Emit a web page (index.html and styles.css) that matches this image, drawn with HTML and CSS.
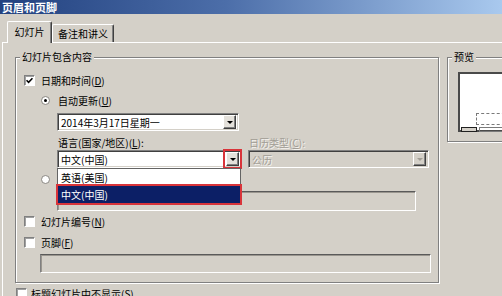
FILE: index.html
```html
<!DOCTYPE html>
<html lang="zh-CN">
<head>
  <meta charset="UTF-8">
  <meta name="viewport" content="width=device-width, initial-scale=1.0">
  <title>页眉和页脚</title>
  <link rel="stylesheet" href="styles.css">
</head>
<body>
  <div class="titlebar">页眉和页脚</div>

  <div class="dialog">
    <div class="tabs">
      <div class="tab active">幻灯片</div>
      <div class="tab">备注和讲义</div>
    </div>

    <div class="tab-page">
      <div class="columns">
        <div class="group content-group">
          <div class="group-label">幻灯片包含内容</div>

          <div class="check-row date-row">
            <span class="checkbox"><svg width="7" height="7" viewBox="0 0 7 7"><path d="M0.5 3.2 L2.6 5.4 L6.5 1.2" fill="none" stroke="#000" stroke-width="1.6"/></svg></span>
            <span>日期和时间(<u>D</u>)</span>
          </div>

          <div class="radio-row auto-row">
            <span class="radio selected"></span>
            <span>自动更新(<u>U</u>)</span>
          </div>

          <div class="combo date-combo">
            <span class="combo-text">2014年3月17日星期一</span>
            <span class="drop-button"></span>
          </div>

          <div class="lang-grid">
            <div class="field">
              <div class="field-label">语言(国家/地区)(<u>L</u>):</div>
              <div class="combo">
                <span class="combo-text">中文(中国)</span>
                <span class="drop-button marked"></span>
                <div class="drop-list">
                  <div class="drop-item">英语(美国)</div>
                  <div class="drop-item selected">中文(中国)</div>
                </div>
              </div>
            </div>
            <div class="field disabled">
              <div class="field-label">日历类型(<u>C</u>):</div>
              <div class="combo">
                <span class="combo-text">公历</span>
                <span class="drop-button"></span>
              </div>
            </div>
          </div>

          <!-- the label of this radio is hidden by the open list -->
          <div class="radio-row fixed-row">
            <span class="radio"></span>
          </div>
          <div class="edit fixed-edit"></div>

          <div class="check-row number-row">
            <span class="checkbox"></span>
            <span>幻灯片编号(<u>N</u>)</span>
          </div>

          <div class="check-row footer-row">
            <span class="checkbox"></span>
            <span>页脚(<u>F</u>)</span>
          </div>
          <div class="edit footer-edit"></div>
        </div>

        <div class="group preview-group">
          <div class="group-label">预览</div>
          <div class="preview-page">
            <div class="pv-area"></div>
            <div class="pv-date"></div>
            <div class="pv-footer"></div>
          </div>
        </div>
      </div>

      <div class="check-row title-row">
        <span class="checkbox"></span>
        <span>标题幻灯片中不显示(<u>S</u>)</span>
      </div>
    </div>
  </div>
</body>
</html>
```

FILE: styles.css
```css
* {
  box-sizing: border-box;
}

body {
  width: 502px;
  height: 296px;
  margin: 0;
  overflow: hidden;
  font-family: "Noto Sans CJK SC", sans-serif;
  font-size: 10px;
  color: #000;
  background-color: #d4d0c8;
}

u {
  text-decoration: underline;
}

.titlebar {
  height: 14px;
  padding-left: 2px;
  background: linear-gradient(to right, #22417f, #4c6ea9 45%, #a9c9ee);
  color: #fff;
  font-size: 11px;
  font-weight: bold;
  line-height: 14px;
}

.dialog {
  padding: 7px 0 0 2px;
}

/* tabs */
.tabs {
  display: flex;
  align-items: flex-end;
  height: 21px;
  padding-left: 5px;
}

.tab {
  height: 18px;
  width: 62px;
  text-align: center;
  line-height: 17px;
  border-top: 1px solid #fff;
  border-left: 1px solid #fff;
  border-right: 1px solid #404040;
  box-shadow: inset -1px 0 0 #808080;
  border-radius: 2px 2px 0 0;
}

.tab.active {
  position: relative;
  z-index: 1;
  width: 45px;
  height: 22px;
  margin-bottom: -1px;
  line-height: 20px;
  background-color: #d4d0c8;
}

.tab-page {
  height: 260px;
  padding: 14px 0 0 12px;
  overflow: hidden;
  border-top: 1px solid #fff;
  border-left: 1px solid #fff;
}

.columns {
  display: flex;
  align-items: flex-start;
  gap: 8px;
}

/* group boxes */
.group {
  flex-shrink: 0;
  border: 1px solid #808080;
  box-shadow: 1px 1px 0 #fff, inset 1px 1px 0 #fff;
}

.group-label {
  display: table;
  margin: -8px 0 0 4px;
  padding: 0 2px;
  line-height: 14px;
  background-color: #d4d0c8;
}

.content-group {
  width: 424px;
  padding-bottom: 9px;
}

.preview-group {
  width: 80px;
  padding-bottom: 9px;
}

/* check boxes and radios */
.check-row,
.radio-row {
  display: flex;
  align-items: center;
  height: 13px;
  line-height: 13px;
  white-space: nowrap;
}

.check-row {
  gap: 6px;
  margin-left: 8px;
}

.radio-row {
  gap: 8px;
  margin-left: 25px;
}

.checkbox {
  display: flex;
  align-items: center;
  justify-content: center;
  width: 11px;
  height: 11px;
  background-color: #fff;
  border: 1px solid;
  border-color: #808080 #fff #fff #808080;
  box-shadow: inset 1px 1px 0 #a0a0a0;
}

.radio {
  display: flex;
  align-items: center;
  justify-content: center;
  width: 9px;
  height: 9px;
  border-radius: 50%;
  background-color: #fff;
  border: 1px solid #8a8782;
}

.radio.selected::after {
  content: "";
  width: 3px;
  height: 3px;
  border-radius: 50%;
  background-color: #000;
}

.date-row {
  margin-top: 10px;
}

.auto-row {
  margin-top: 7px;
}

.fixed-row {
  margin-top: 5px;
}

.number-row {
  margin-top: 4px;
}

.footer-row {
  margin-top: 8px;
}

.title-row {
  margin: 4px 0 0 1px;
  gap: 4px;
}

/* combo boxes */
.combo {
  position: relative;
  display: flex;
  align-items: center;
  height: 18px;
  padding: 0 2px 0 3px;
  background-color: #fff;
  border: 1px solid;
  border-color: #808080 #fff #fff #808080;
  box-shadow: inset 1px 1px 0 #404040, inset -1px -1px 0 #d4d0c8;
  white-space: nowrap;
}

.date-combo {
  width: 182px;
  margin: 6px 0 0 41px;
}

.drop-button {
  display: flex;
  align-items: center;
  justify-content: center;
  width: 13px;
  height: 14px;
  margin-left: auto;
  background-color: #e4e1db;
  border: 1px solid;
  border-color: #fff #404040 #404040 #fff;
  box-shadow: inset -1px -1px 0 #808080;
}

.drop-button::after {
  content: "";
  border-left: 3px solid transparent;
  border-right: 3px solid transparent;
  border-top: 3px solid #000;
}

.drop-button.marked {
  outline: 2px solid #d9343a;
  outline-offset: 1px;
}

.lang-grid {
  display: grid;
  grid-template-columns: 185px 181px;
  column-gap: 6px;
  margin: 4px 0 0 41px;
}

.field-label {
  padding-left: 1px;
  line-height: 15px;
  white-space: nowrap;
}

.disabled .field-label,
.disabled .combo-text {
  color: #a19d95;
  text-shadow: 1px 1px 0 #f4f2ee;
}

.disabled .combo {
  background-color: #d4d0c8;
}

.disabled .drop-button {
  background-color: #d4d0c8;
}

.disabled .drop-button::after {
  border-top-color: #a19d95;
}

/* open list of the language combo */
.drop-list {
  position: absolute;
  z-index: 2;
  top: calc(100% + 1px);
  left: -1px;
  right: 0;
  background-color: #fff;
  border: 1px solid #646464;
}

.drop-item {
  height: 17px;
  padding-left: 3px;
  line-height: 17px;
}

.drop-item.selected {
  position: relative;
  background-color: #0c1f66;
  color: #fff;
  box-shadow: 0 0 0 2px #d9343a;
}

/* edit fields */
.edit {
  background-color: #d4d0c8;
  border: 1px solid;
  border-color: #5a5a5a #fff #fff #808080;
  box-shadow: inset 1px 1px 0 #9a968f;
}

.fixed-edit {
  width: 359px;
  height: 20px;
  margin: 5px 0 0 41px;
}

.footer-edit {
  width: 391px;
  height: 19px;
  margin: 5px 0 0 24px;
}

/* preview */
.preview-page {
  position: relative;
  width: 60px;
  height: 60px;
  margin: 8px 0 0 10px;
  background-color: #fff;
  border: 2px solid #4a4a4a;
  border-right: none;
}

.pv-area {
  position: absolute;
  left: 16px;
  top: 39px;
  width: 60px;
  height: 12px;
  border: 1px dashed #7a7a7a;
}

.pv-date {
  position: absolute;
  left: 1px;
  top: 53px;
  width: 16px;
  height: 5px;
  background-color: #d4d0c8;
  border: 1px solid #202020;
}

.pv-footer {
  position: absolute;
  left: 19px;
  top: 53px;
  width: 30px;
  height: 5px;
  border: 1px solid #7a7a7a;
}
```
